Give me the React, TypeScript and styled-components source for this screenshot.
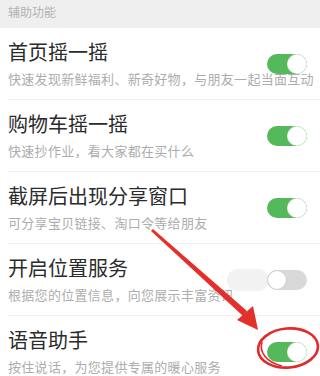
import React from 'react';
import styled, { createGlobalStyle } from 'styled-components';

const GlobalStyle = createGlobalStyle`
  html, body {
    margin: 0;
    padding: 0;
    background: #fff;
  }
  body {
    font-family: "Noto Sans CJK SC", "Noto Sans", sans-serif;
  }
`;

type Item = { title: string; desc: string; on: boolean };

const items: Item[] = [
  { title: '首页摇一摇', desc: '快速发现新鲜福利、新奇好物，与朋友一起当面互动', on: true },
  { title: '购物车摇一摇', desc: '快速抄作业，看大家都在买什么', on: true },
  { title: '截屏后出现分享窗口', desc: '可分享宝贝链接、淘口令等给朋友', on: true },
  { title: '开启位置服务', desc: '根据您的位置信息，向您展示丰富资讯', on: false },
  { title: '语音助手', desc: '按住说话，为您提供专属的暖心服务', on: true },
];

const App: React.FC = () => {
  return (
    <Page>
      <GlobalStyle />
      <SectionHeader>辅助功能</SectionHeader>
      <List>
        {items.map((item) => (
          <Row key={item.title}>
            <Title>{item.title}</Title>
            <Desc>{item.desc}</Desc>
            <Switch $on={item.on}>
              <Knob $on={item.on} />
            </Switch>
          </Row>
        ))}
      </List>
      {/* red annotation drawn over the screenshot */}
      <Marks viewBox="0 0 320 376" width="320" height="376">
        <polygon points="151,231 153,229 247,311 243,316" fill="#e3302b" />
        <polygon points="258,330 237,320 253,306" fill="#e3302b" />
        <ellipse cx="288" cy="348" rx="30" ry="19.5" fill="none" stroke="#e12a2a" strokeWidth="2.6" transform="rotate(-5 288 348)" />
        <path d="M262 342 C 259 352, 266 362, 282 366" fill="none" stroke="#e12a2a" strokeWidth="1.6" />
      </Marks>
    </Page>
  );
};

export default App;

const Page = styled.div`
  position: relative;
  width: 320px;
  height: 376px;
  overflow: hidden;
  background: #fff;
`;

const SectionHeader = styled.div`
  height: 28px;
  box-sizing: border-box;
  padding: 4px 8px 0;
  background: #efefef;
  color: #b3b3b3;
  font-size: 12px;
  line-height: 15px;
`;

const List = styled.div`
  display: flex;
  flex-direction: column;
`;

const Row = styled.div`
  position: relative;
  display: grid;
  grid-template-columns: 1fr auto;
  grid-template-rows: 24px 18px;
  row-gap: 6px;
  height: 72px;
  box-sizing: border-box;
  padding: 12px 13px 12px 8px;
  &::after {
    content: '';
    position: absolute;
    left: 8px;
    right: 0;
    bottom: 0;
    height: 1px;
    background: #f0f0f0;
  }
`;

const Title = styled.div`
  grid-column: 1;
  grid-row: 1;
  font-size: 20px;
  line-height: 24px;
  color: #2b2b2b;
  white-space: nowrap;
`;

const Desc = styled.div`
  grid-column: 1 / -1;
  grid-row: 2;
  font-size: 13px;
  line-height: 18px;
  letter-spacing: 0.3px;
  color: #adadad;
  white-space: nowrap;
`;

const Switch = styled.div<{ $on: boolean }>`
  grid-column: 2;
  grid-row: 1 / span 2;
  align-self: center;
  width: 40px;
  height: 20px;
  border-radius: 10px;
  background: ${(p) => (p.$on ? '#55b95b' : '#d9d9d9')};
  box-shadow: ${(p) => (p.$on ? 'none' : '-39px 0 0 1px #f2f2f2')};
  display: flex;
  align-items: center;
  justify-content: ${(p) => (p.$on ? 'flex-end' : 'flex-start')};
  padding: 0 1px;
  box-sizing: border-box;
`;

const Knob = styled.div<{ $on: boolean }>`
  width: 18px;
  height: 18px;
  border-radius: 50%;
  background: #fff;
  box-shadow: 0 0 0 1px ${(p) => (p.$on ? '#e8f3e8' : '#cfcfcf')};
`;

const Marks = styled.svg`
  position: absolute;
  left: 0;
  top: 0;
  pointer-events: none;
`;
